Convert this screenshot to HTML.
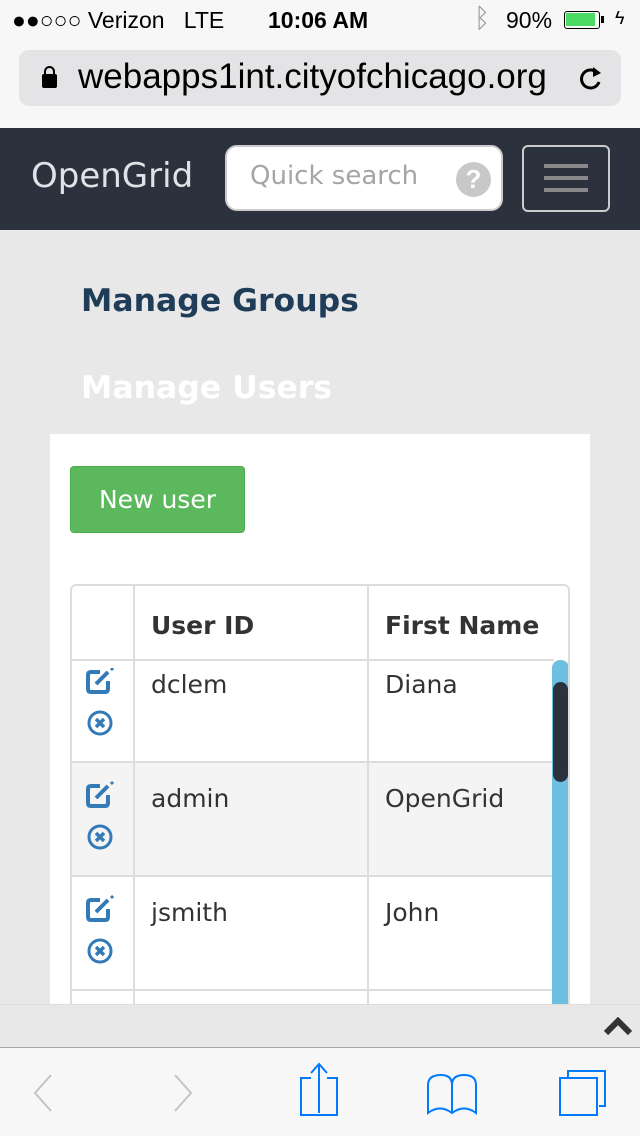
<!DOCTYPE html>
<html><head><meta charset="utf-8"><style>
*{margin:0;padding:0;box-sizing:border-box}
body{width:640px;height:1136px;overflow:hidden;background:#e8e8e8;font-family:"Liberation Sans",sans-serif;position:relative}
.abs{position:absolute}
.os{font-family:"DejaVu Sans","Liberation Sans",sans-serif}
</style></head><body>
<div class="abs" style="left:0;top:0;width:640px;height:128px;background:#f7f7f7"></div>
<div class="abs" style="left:12px;top:7px;font-size:23px;color:#000">●●○○○ Verizon &nbsp; LTE</div>
<div class="abs" style="left:268px;top:7px;font-size:23px;font-weight:bold">10:06 AM</div>
<div class="abs" style="left:474px;top:3px;font-size:27px;color:#999">ᛒ</div>
<div class="abs" style="left:506px;top:7px;font-size:23px">90%</div>
<div class="abs" style="left:564px;top:11px;width:36px;height:18px;border:1.5px solid #000;border-radius:3px;padding:1px"><div style="width:29px;height:13px;background:#4cd964"></div></div>
<div class="abs" style="left:601px;top:16px;width:3px;height:7px;background:#000"></div>
<div class="abs" style="left:615px;top:8px;font-size:18px">ϟ</div>
<div class="abs" style="left:19px;top:50px;width:602px;height:56px;background:#e4e4e6;border-radius:10px"></div>
<div class="abs" style="left:42px;top:74px;width:15px;height:14px;background:#000;border-radius:2px"></div>
<div class="abs" style="left:44px;top:66px;width:11px;height:12px;border:2.5px solid #000;border-bottom:none;border-radius:6px 6px 0 0"></div>
<div class="abs" style="left:78px;top:57px;font-size:35px;color:#000;white-space:nowrap">webapps1int.cityofchicago.org</div>
<svg class="abs" style="left:576px;top:62px" width="30" height="32" viewBox="0 0 30 32"><path d="M22 12 A9 9 0 1 0 23 20" fill="none" stroke="#000" stroke-width="3"/><path d="M17 5 L25 11 L17 15Z" fill="#000"/></svg>
<div class="abs" style="left:0;top:128px;width:640px;height:102px;background:#2b313d"></div>
<div class="abs os" style="left:31px;top:156px;font-size:34px;color:#dfe3e8">OpenGrid</div>
<div class="abs" style="left:225px;top:145px;width:278px;height:66px;background:#fff;border:2px solid #ccc;border-radius:12px"></div>
<div class="abs os" style="left:250px;top:161px;font-size:26px;color:#a5a5a5">Quick search</div>
<div class="abs" style="left:456px;top:162px;width:35px;height:35px;border-radius:50%;background:#c8c8c8;color:#fff;font-size:26px;font-weight:bold;text-align:center;line-height:35px">?</div>
<div class="abs" style="left:522px;top:145px;width:88px;height:67px;border:2px solid #ccc;border-radius:6px"></div>
<div class="abs" style="left:544px;top:164px;width:44px;height:4px;background:#888;box-shadow:0 12px 0 #888,0 24px 0 #888"></div>
<div class="abs os" style="left:81px;top:283px;font-size:31.5px;font-weight:bold;color:#1f3d58">Manage Groups</div>
<div class="abs os" style="left:81px;top:370px;font-size:31.5px;font-weight:bold;color:#fff">Manage Users</div>
<div class="abs" style="left:50px;top:434px;width:540px;height:600px;background:#fff"></div>
<div class="abs os" style="left:70px;top:466px;width:175px;height:67px;background:#5cb85c;border:1px solid #4cae4c;border-radius:4px;color:#fff;font-size:25px;text-align:center;line-height:65px">New user</div>
<div class="abs" style="left:70px;top:584px;width:500px;height:440px;border:2px solid #ddd;border-radius:6px;overflow:hidden">
 <div class="abs" style="left:0;top:176px;width:482px;height:114px;background:#f4f4f4"></div>
 <div class="abs" style="left:61px;top:0;width:2px;height:440px;background:#ddd"></div>
 <div class="abs" style="left:295px;top:0;width:2px;height:440px;background:#ddd"></div>
 <div class="abs" style="left:0;top:73px;width:482px;height:2px;background:#ddd"></div>
 <div class="abs" style="left:0;top:175px;width:482px;height:2px;background:#ddd"></div>
 <div class="abs" style="left:0;top:289px;width:482px;height:2px;background:#ddd"></div>
 <div class="abs" style="left:0;top:403px;width:482px;height:2px;background:#ddd"></div>
 <div class="abs os" style="left:79px;top:25px;font-size:25px;font-weight:bold;color:#333">User ID</div>
 <div class="abs os" style="left:313px;top:25px;font-size:25px;font-weight:bold;color:#333">First Name</div>
 <div class="abs os" style="left:79px;top:84px;font-size:25px;color:#333">dclem</div>
 <div class="abs os" style="left:313px;top:84px;font-size:25px;color:#333">Diana</div>
 <div class="abs os" style="left:79px;top:198px;font-size:25px;color:#333">admin</div>
 <div class="abs os" style="left:313px;top:198px;font-size:25px;color:#333">OpenGrid</div>
 <div class="abs os" style="left:79px;top:312px;font-size:25px;color:#333">jsmith</div>
 <div class="abs os" style="left:313px;top:312px;font-size:25px;color:#333">John</div>
 <div class="abs" style="left:480px;top:74px;width:17px;height:370px;background:#6ec0e0;border-radius:8px 8px 0 0"></div>
 <div class="abs" style="left:481px;top:96px;width:15px;height:100px;background:#2b313d;border-radius:8px"></div>
</div>
<svg class="abs" style="left:86px;top:668px" width="34" height="390" viewBox="0 0 34 390">
<g id="ic" fill="none" stroke="#337ab7">
<path d="M14 4 H5 Q2 4 2 7 V21 Q2 24 5 24 H19 Q22 24 22 21 V13" stroke-width="4"/>
<path d="M10 16 L22 4" stroke-width="4"/><path d="M25 0 L27 2" stroke-width="3"/>
<circle cx="14" cy="55" r="11" stroke-width="3"/><path d="M10 51 L18 59 M18 51 L10 59" stroke-width="3.5"/>
</g>
<use href="#ic" y="114"/><use href="#ic" y="228"/>
</svg>
<div class="abs" style="left:2px;top:1004px;width:636px;height:43px;background:#e8e8e8;border-top:1px solid #ddd"></div>
<svg class="abs" style="left:604px;top:1017px" width="28" height="20"><path d="M2 16 L14 4 L26 16" fill="none" stroke="#333" stroke-width="6"/></svg>
<div class="abs" style="left:0;top:1047px;width:640px;height:89px;background:#f7f7f7;border-top:1px solid #a8a8a8"></div>
<svg class="abs" style="left:0;top:1048px" width="640" height="88" viewBox="0 1048 640 88">
<g fill="none" stroke-width="2">
<path d="M51 1075 L35 1093 L51 1111" stroke="#c4c4c4"/>
<path d="M175 1075 L191 1093 L175 1111" stroke="#c4c4c4"/>
<g stroke="#007aff">
<path d="M311 1078 H301 V1115 H337 V1078 H327"/><path d="M319 1113 V1064 M311 1073 L319 1064 L327 1073"/>
<path d="M452 1113 V1085 Q452 1075 441 1075 Q428 1075 428 1085 V1113 Q440 1104 452 1113 Q464 1104 476 1113 V1085 Q476 1075 464 1075 Q452 1075 452 1085"/>
<path d="M560 1078 H597 V1115 H560Z"/><path d="M568 1077 V1071 H605 V1106 H599"/>
</g></g></svg>
</body></html>
